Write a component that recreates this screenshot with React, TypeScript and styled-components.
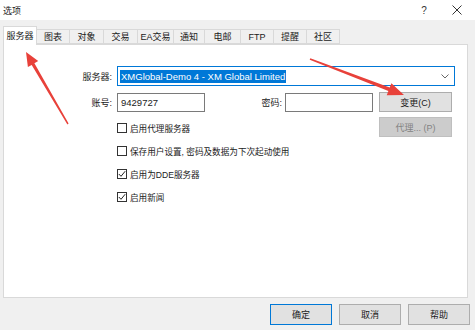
import React from "react";
import styled, { createGlobalStyle } from "styled-components";

const GlobalStyle = createGlobalStyle`
  html, body {
    margin: 0;
    padding: 0;
    background: #f0f0f0;
  }
  body {
    font-family: "Liberation Sans", "Noto Sans CJK SC", sans-serif;
    font-size: 9px;
    color: #1a1a1a;
  }
`;

const tabs = [
  { name: "服务器", width: 34 },
  { name: "图表", width: 34 },
  { name: "对象", width: 35 },
  { name: "交易", width: 35 },
  { name: "EA交易", width: 37 },
  { name: "通知", width: 32 },
  { name: "电邮", width: 37 },
  { name: "FTP", width: 34 },
  { name: "提醒", width: 34 },
  { name: "社区", width: 34 },
];

const checks = [
  { label: "启用代理服务器", checked: false },
  { label: "保存用户设置, 密码及数据为下次起动使用", checked: false },
  { label: "启用为DDE服务器", checked: true },
  { label: "启用新闻", checked: true },
];

type Pt = [number, number];

// tapered red annotation arrow, tail thin and head wide
function arrowPoints(tail: Pt, tip: Pt, headLen: number, headHalf: number, tailHalf: number, neckHalf: number) {
  const dx = tip[0] - tail[0];
  const dy = tip[1] - tail[1];
  const len = Math.hypot(dx, dy);
  const ux = dx / len;
  const uy = dy / len;
  const px = -uy;
  const py = ux;
  const bx = tip[0] - ux * headLen;
  const by = tip[1] - uy * headLen;
  const pts: Pt[] = [
    [tail[0] + px * tailHalf, tail[1] + py * tailHalf],
    [bx + px * neckHalf, by + py * neckHalf],
    [bx + px * headHalf, by + py * headHalf],
    tip,
    [bx - px * headHalf, by - py * headHalf],
    [bx - px * neckHalf, by - py * neckHalf],
    [tail[0] - px * tailHalf, tail[1] - py * tailHalf],
  ];
  return pts.map((p) => `${p[0].toFixed(1)},${p[1].toFixed(1)}`).join(" ");
}

export default function App() {
  return (
    <>
      <GlobalStyle />
      <Window>
        <TitleBar>
          <Title>选项</Title>
          <TitleButtons>
            <HelpMark>?</HelpMark>
            <CloseMark>
              <svg width="10" height="10" viewBox="0 0 10 10">
                <path d="M0.5 0.5 L9.5 9.5 M9.5 0.5 L0.5 9.5" stroke="#333" strokeWidth="1" fill="none" />
              </svg>
            </CloseMark>
          </TitleButtons>
        </TitleBar>

        <TabStrip>
          {tabs.map((t, i) => (
            <Tab key={t.name} $active={i === 0} $width={t.width}>
              {t.name}
            </Tab>
          ))}
        </TabStrip>

        <Panel>
          <FormRow>
            <FieldLabel $width={108}>服务器:</FieldLabel>
            <Combo>
              <Selected>XMGlobal-Demo 4 - XM Global Limited</Selected>
              <Chevron>
                <svg width="8" height="5" viewBox="0 0 8 5">
                  <path d="M0.5 0.5 L4 4 L7.5 0.5" stroke="#666" strokeWidth="1" fill="none" />
                </svg>
              </Chevron>
            </Combo>
          </FormRow>

          <FormRow $gap={6}>
            <FieldLabel $width={108}>账号:</FieldLabel>
            <TextInput>9429727</TextInput>
            <FieldLabel $width={77} $pad={3}>密码:</FieldLabel>
            <TextInput />
            <DialogButton $ml={6}>变更(C)</DialogButton>
          </FormRow>

          <Lower>
            <CheckList>
              {checks.map((c) => (
                <CheckRow key={c.label}>
                  <Box>
                    {c.checked && (
                      <svg width="8" height="8" viewBox="0 0 8 8">
                        <path d="M0.8 4 L3 6.3 L7.2 1.2" stroke="#222" strokeWidth="1" fill="none" />
                      </svg>
                    )}
                  </Box>
                  <CheckText>{c.label}</CheckText>
                </CheckRow>
              ))}
            </CheckList>
            <DialogButton $disabled>代理... (P)</DialogButton>
          </Lower>
        </Panel>

        <Footer>
          <FooterButton $default>确定</FooterButton>
          <FooterButton>取消</FooterButton>
          <FooterButton>帮助</FooterButton>
        </Footer>

        <Annotations width="475" height="330" viewBox="0 0 475 330">
          <polygon points={arrowPoints([68, 124], [26, 52], 14, 6, 0.7, 1.6)} fill="#e8413a" />
          <polygon points={arrowPoints([310, 59], [404, 95], 16, 6.5, 0.7, 1.8)} fill="#e8413a" />
        </Annotations>
      </Window>
    </>
  );
}

const Window = styled.div`
  position: relative;
  width: 475px;
  height: 330px;
  background: #f0f0f0;
  display: flex;
  flex-direction: column;
  overflow: hidden;
`;

const TitleBar = styled.div`
  height: 20px;
  background: #fff;
  display: flex;
  align-items: center;
  padding-left: 3px;
`;

const Title = styled.span`
  flex: 1;
`;

const TitleButtons = styled.div`
  display: flex;
  align-items: center;
`;

const HelpMark = styled.span`
  width: 30px;
  text-align: center;
  font-size: 10px;
  color: #333;
`;

const CloseMark = styled.span`
  width: 36px;
  display: flex;
  justify-content: center;
`;

const TabStrip = styled.div`
  margin-top: 6px;
  height: 18px;
  padding-left: 3px;
  display: flex;
  align-items: flex-end;
  position: relative;
  z-index: 1;
`;

const Tab = styled.div<{ $active?: boolean; $width: number }>`
  box-sizing: border-box;
  width: ${(p) => p.$width}px;
  height: ${(p) => (p.$active ? 19 : 15)}px;
  margin-bottom: ${(p) => (p.$active ? -1 : 0)}px;
  margin-right: -1px;
  border: 1px solid #d9d9d9;
  border-bottom: ${(p) => (p.$active ? "none" : "1px solid #d9d9d9")};
  background: ${(p) => (p.$active ? "#fff" : "#f0f0f0")};
  display: flex;
  align-items: center;
  justify-content: center;
  padding-bottom: ${(p) => (p.$active ? 2 : 0)}px;
  position: relative;
  z-index: ${(p) => (p.$active ? 2 : 0)};
`;

const Panel = styled.div`
  box-sizing: border-box;
  margin-left: 3px;
  width: 465px;
  height: 254px;
  background: #fff;
  border: 1px solid #d9d9d9;
  padding-top: 21px;
`;

const FormRow = styled.div<{ $gap?: number }>`
  display: flex;
  align-items: center;
  height: 20px;
  margin-top: ${(p) => p.$gap ?? 0}px;
`;

const FieldLabel = styled.span<{ $width: number; $pad?: number }>`
  width: ${(p) => p.$width}px;
  text-align: right;
  padding-right: ${(p) => p.$pad ?? 5}px;
`;

const Combo = styled.div`
  box-sizing: border-box;
  width: 338px;
  height: 20px;
  border: 1px solid #0078d7;
  display: flex;
  align-items: center;
  padding-left: 2px;
`;

const Selected = styled.span`
  background: #0078d7;
  color: #fff;
  padding: 1px 1px;
  flex: none;
  font-size: 9.5px;
`;

const Chevron = styled.span`
  margin-left: auto;
  margin-right: 5px;
  display: flex;
`;

const TextInput = styled.div`
  box-sizing: border-box;
  width: 88px;
  height: 19px;
  border: 1px solid #7a7a7a;
  background: #fff;
  padding-left: 3px;
  display: flex;
  align-items: center;
  font-size: 9.5px;
`;

const DialogButton = styled.div<{ $disabled?: boolean; $ml?: number }>`
  box-sizing: border-box;
  width: 73px;
  height: 20px;
  margin-left: ${(p) => p.$ml ?? 0}px;
  background: ${(p) => (p.$disabled ? "#cccccc" : "#e1e1e1")};
  border: 1px solid ${(p) => (p.$disabled ? "#bfbfbf" : "#adadad")};
  color: ${(p) => (p.$disabled ? "#838383" : "#1a1a1a")};
  display: flex;
  align-items: center;
  justify-content: center;
`;

const Lower = styled.div`
  display: flex;
  align-items: flex-start;
  margin-top: 5px;
`;

const CheckList = styled.div`
  margin-left: 113px;
  width: 262px;
  display: flex;
  flex-direction: column;
  margin-top: -1px;
`;

const CheckRow = styled.div`
  height: 23px;
  display: flex;
  align-items: center;
`;

const Box = styled.span`
  box-sizing: border-box;
  width: 10px;
  height: 10px;
  border: 1px solid #333;
  background: #fff;
  display: flex;
  align-items: center;
  justify-content: center;
  margin-right: 3px;
`;

const CheckText = styled.span`
  color: #1a1a1a;
  font-size: 8.6px;
`;

const Footer = styled.div`
  display: flex;
  justify-content: flex-end;
  gap: 7px;
  padding: 6px 5px 0 0;
`;

const FooterButton = styled.div<{ $default?: boolean }>`
  box-sizing: border-box;
  width: 62px;
  height: 21px;
  background: #e1e1e1;
  border: 1px solid ${(p) => (p.$default ? "#0078d7" : "#adadad")};
  display: flex;
  align-items: center;
  justify-content: center;
`;

const Annotations = styled.svg`
  position: absolute;
  left: 0;
  top: 0;
  pointer-events: none;
  z-index: 5;
`;
